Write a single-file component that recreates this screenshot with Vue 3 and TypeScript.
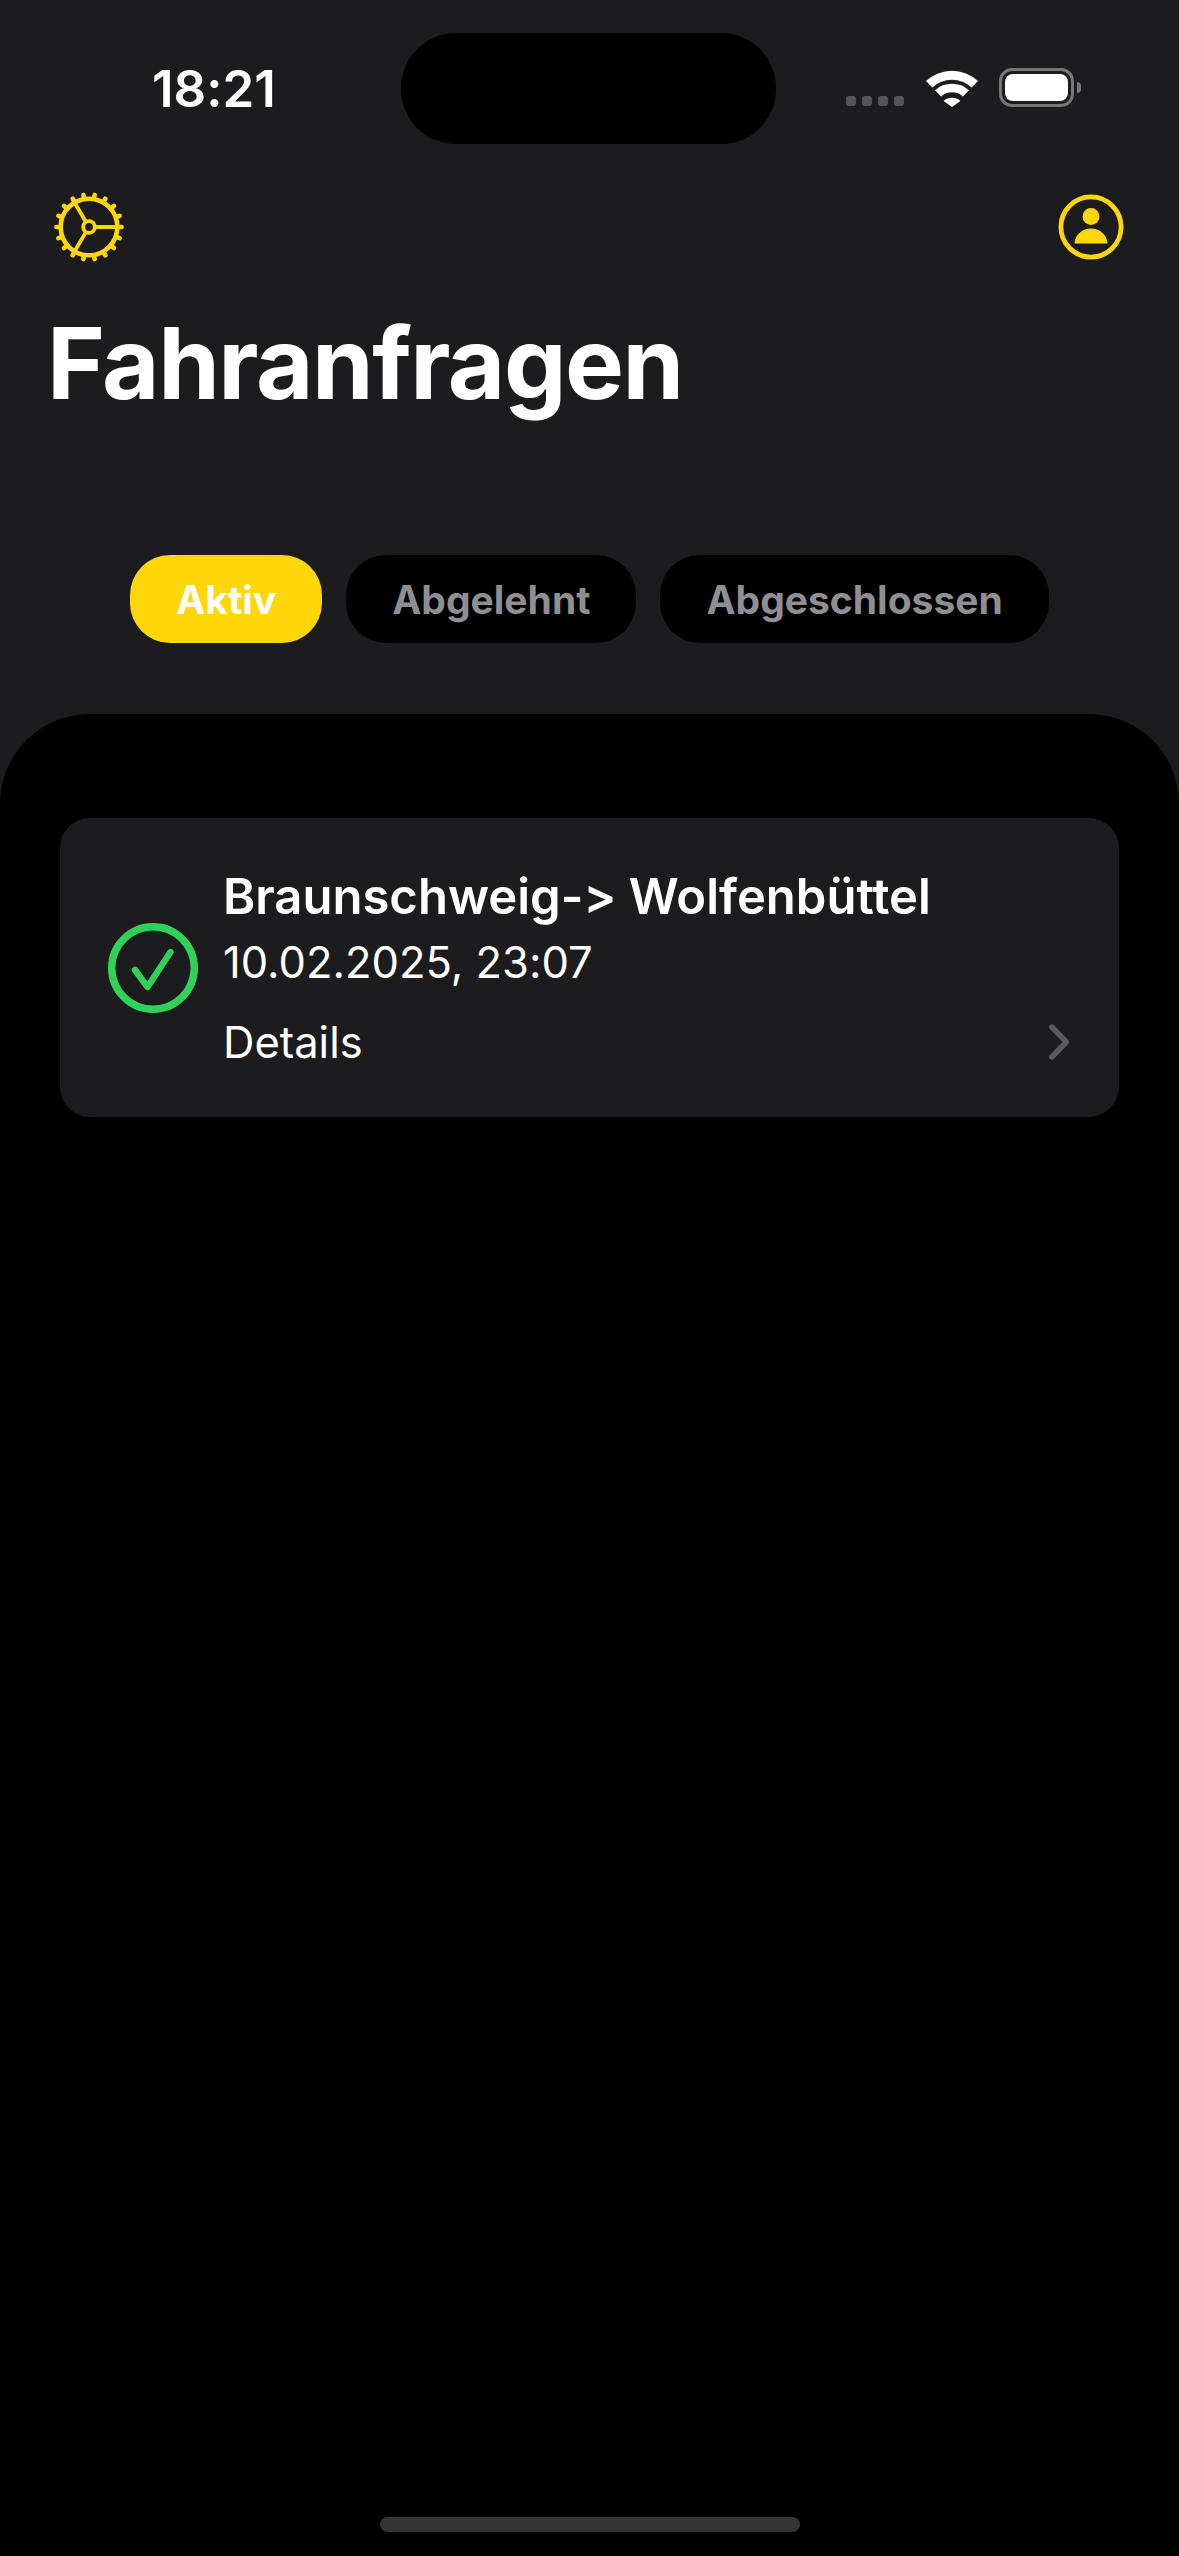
<template>
    <div class="screen">
        <header class="status-bar">
            <span class="status-time">18:21</span>
            <div class="island"></div>
            <div class="status-icons">
                <div class="signal">
                    <i
                        v-for="dot in 4"
                        :key="dot"
                    ></i>
                </div>
                <svg class="wifi" width="52" height="38" viewBox="0 0 52 38">
                    <path d="M0 12A38 38 0 0 1 52 12L45.7 18.4A29 29 0 0 0 6.3 18.4Z" />
                    <path d="M9 21.3A25 25 0 0 1 43 21.3L36.8 27.4A16.5 16.5 0 0 0 15.2 27.4Z" />
                    <path d="M17.6 32A12.5 12.5 0 0 1 34.4 32L26 38Z" />
                </svg>
                <div class="battery">
                    <div class="battery-fill"></div>
                </div>
                <div class="battery-cap"></div>
            </div>
        </header>

        <div class="toolbar">
            <svg width="70" height="70" viewBox="0 0 70 70" fill="none" stroke="#ffd60a">
                <line
                    v-for="tooth in gearTeeth"
                    :key="tooth.angle"
                    :x1="tooth.x1"
                    :y1="tooth.y1"
                    :x2="tooth.x2"
                    :y2="tooth.y2"
                    stroke-width="4.6"
                    stroke-linecap="round"
                />
                <circle cx="35" cy="35" r="28.3" stroke-width="4.6" />
                <circle cx="35" cy="35" r="5.8" stroke-width="3.8" />
                <path d="M41 35H63M32 30L20.5 10.5M32 40L20.5 59.5" stroke-width="3.8" />
            </svg>
            <svg width="66" height="66" viewBox="0 0 66 66">
                <circle cx="33" cy="33" r="30.1" fill="none" stroke="#ffd60a" stroke-width="4.8" />
                <circle cx="33" cy="22.5" r="8.4" fill="#ffd60a" />
                <path d="M16.5 49.5C17 40.5 24.5 34.5 33 34.5S49 40.5 49.5 49.5Z" fill="#ffd60a" />
            </svg>
        </div>

        <h1 class="page-title">Fahranfragen</h1>

        <nav class="filters">
            <button
                v-for="filter in filters"
                :key="filter"
                class="filter-pill"
                :class="{ active: filter === activeFilter }"
            >
                {{ filter }}
            </button>
        </nav>

        <main class="panel">
            <section class="request-card">
                <svg class="request-status" width="90" height="90" viewBox="0 0 90 90" fill="none" stroke="#30d158">
                    <circle cx="45" cy="45" r="41.25" stroke-width="7.5" />
                    <path
                        d="M27 47L39.5 64L62.5 29"
                        stroke-width="6.4"
                        stroke-linecap="round"
                        stroke-linejoin="round"
                    />
                </svg>
                <div class="request-body">
                    <div class="request-route">Braunschweig-&gt; Wolfenbüttel</div>
                    <div class="request-date">10.02.2025, 23:07</div>
                    <div class="request-footer">
                        <span class="request-details">Details</span>
                        <svg width="20" height="36" viewBox="0 0 20 36" fill="none">
                            <path
                                d="M2.8 3L17.4 18L2.8 33"
                                stroke="#5b5b5f"
                                stroke-width="5.4"
                                stroke-linecap="round"
                                stroke-linejoin="round"
                            />
                        </svg>
                    </div>
                </div>
            </section>
            <div class="home-indicator"></div>
        </main>
    </div>
</template>

<script
    lang="ts"
    setup
>
    interface GearTooth {
        angle: number,
        x1: number,
        y1: number,
        x2: number,
        y2: number,
    }

    const filters: Array<string> = ['Aktiv', 'Abgelehnt', 'Abgeschlossen'];
    const activeFilter = 'Aktiv';

    const gearTeeth: Array<GearTooth> = Array.from({ length: 18 }, (_, index) => {
        const angle = index * 20;
        const radians = (angle * Math.PI) / 180;
        return {
            angle,
            x1: 35 + 29 * Math.cos(radians),
            y1: 35 + 29 * Math.sin(radians),
            x2: 35 + 32.6 * Math.cos(radians),
            y2: 35 + 32.6 * Math.sin(radians),
        };
    });
</script>

<style>
    html,
    body {
        margin: 0;
        background: #000;
    }
</style>

<style scoped>
    .screen {
        display: flex;
        flex-direction: column;
        width: 1179px;
        height: 2556px;
        overflow: hidden;
        background: #1c1c1e;
        color: #fff;
        font-family: Inter, "Liberation Sans", sans-serif;
        font-variant-ligatures: none;
        font-feature-settings: "calt" 0;
    }

    .status-bar {
        display: flex;
        align-items: flex-start;
        height: 111px;
        padding-top: 33px;
    }

    .status-time {
        width: 249px;
        margin-left: 152px;
        margin-top: 28px;
        font-size: 51px;
        line-height: 56px;
        font-weight: 600;
    }

    .island {
        width: 375px;
        height: 111px;
        border-radius: 55px;
        background: #000;
    }

    .status-icons {
        display: flex;
        align-items: flex-start;
        margin-left: 70px;
        padding-top: 35px;
    }

    .signal {
        display: flex;
        gap: 6px;
        margin-top: 28px;
    }

    .signal i {
        width: 10px;
        height: 10px;
        border-radius: 3px;
        background: #555557;
    }

    .wifi {
        margin-left: 22px;
        margin-top: 1px;
        fill: #fff;
    }

    .battery {
        box-sizing: border-box;
        width: 75px;
        height: 39px;
        margin-left: 21px;
        padding: 3px;
        border: 3px solid #767678;
        border-radius: 13px;
    }

    .battery-fill {
        height: 100%;
        border-radius: 8px;
        background: #fff;
    }

    .battery-cap {
        width: 4px;
        height: 11px;
        margin-left: 3px;
        margin-top: 14px;
        border-radius: 0 4px 4px 0;
        background: #767678;
    }

    .toolbar {
        display: flex;
        align-items: center;
        justify-content: space-between;
        margin-top: 48px;
        padding: 0 55px 0 54px;
    }

    .page-title {
        margin: 41px 0 0 47px;
        font-size: 99px;
        line-height: 120px;
        font-weight: 700;
        letter-spacing: -1.4px;
    }

    .filters {
        display: flex;
        justify-content: center;
        gap: 24px;
        margin-top: 132px;
    }

    .filter-pill {
        height: 88px;
        padding: 0 46px;
        border: 0;
        border-radius: 40px;
        background: #000;
        color: #8e8e93;
        font-family: inherit;
        font-size: 39px;
        font-weight: 700;
    }

    .filter-pill.active {
        background: #ffd60a;
        color: #fff;
    }

    .panel {
        display: flex;
        flex: 1;
        flex-direction: column;
        margin-top: 71px;
        padding: 104px 60px 24px;
        border-radius: 90px 90px 0 0;
        background: #000;
    }

    .request-card {
        display: flex;
        align-items: center;
        gap: 25px;
        height: 299px;
        padding: 0 50px 0 48px;
        border-radius: 30px;
        background: #1c1c1e;
    }

    .request-status {
        flex-shrink: 0;
    }

    .request-body {
        flex: 1;
    }

    .request-route {
        font-size: 49px;
        line-height: 58px;
        font-weight: 600;
    }

    .request-date {
        margin-top: 10px;
        font-size: 43.5px;
        line-height: 52px;
    }

    .request-footer {
        display: flex;
        align-items: center;
        justify-content: space-between;
        margin-top: 29px;
    }

    .request-details {
        font-size: 43.5px;
        line-height: 50px;
    }

    .home-indicator {
        align-self: center;
        width: 420px;
        height: 15px;
        margin-top: auto;
        border-radius: 8px;
        background: #343434;
    }
</style>
